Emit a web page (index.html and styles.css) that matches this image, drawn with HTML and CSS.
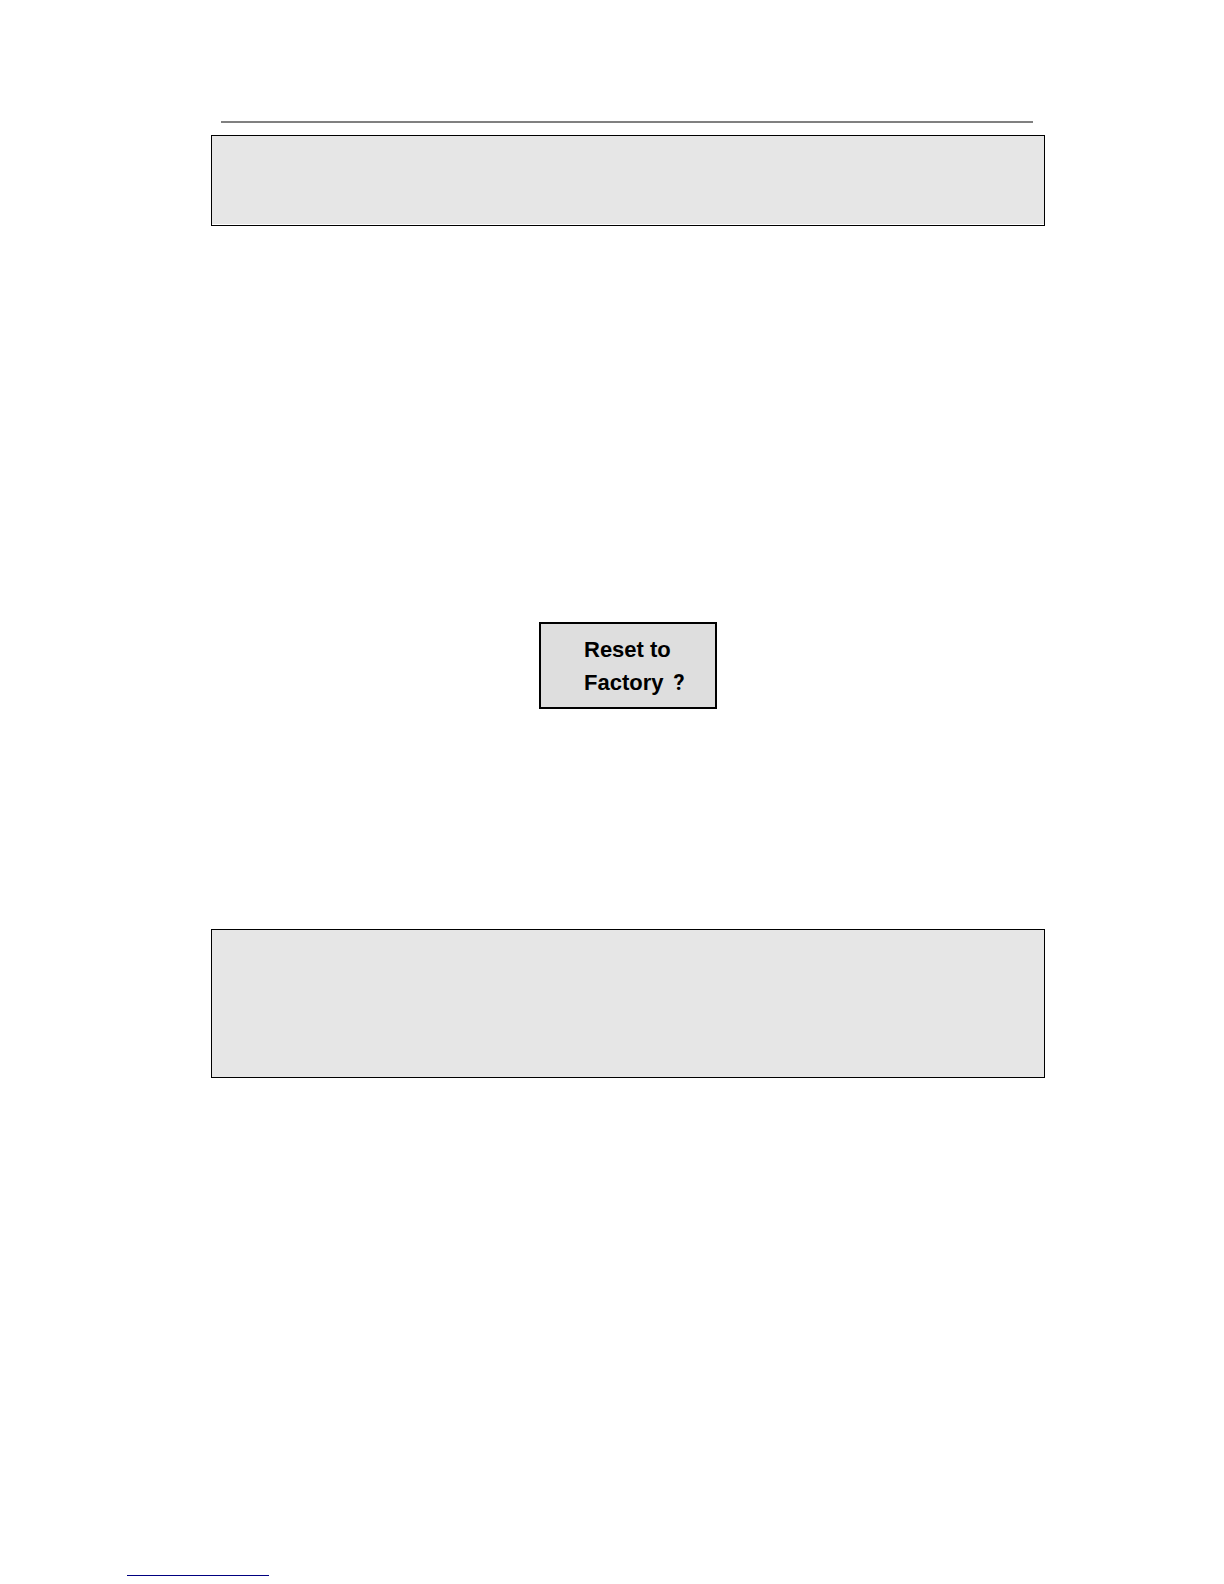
FILE: index.html
```
<!DOCTYPE html>
<html lang="en">
<head>
  <meta charset="UTF-8">
  <title>Reset to Factory</title>
  <link rel="stylesheet" href="styles.css">
</head>
<body>
  <main class="page">
    <hr class="rule">
    <div class="note-box note-small"></div>
    <div class="screen">
      <p>Reset to</p>
      <p>Factory <span class="mark">?</span></p>
    </div>
    <div class="note-box note-large"></div>
  </main>
  <footer class="footer">
    <a href="#" class="footer-link" aria-label="Website"></a>
  </footer>
</body>
</html>
```

FILE: styles.css
```
body {
  margin: 0;
  background: #fff;
  color: #000;
  font-family: "Liberation Sans", Arial, sans-serif;
}
.page {
  padding: 121px 179px 0 211px;
}
.rule {
  height: 2px;
  margin: 0 12px 12px 10px;
  border: 0;
  background: #808080;
}
.note-box {
  box-sizing: border-box;
  border: 1px solid #000;
  background: #e6e6e6;
}
.note-small {
  min-height: 91px;
  box-shadow: inset 0 -1px 0 #fff;
}
.note-large {
  min-height: 149px;
}

/* device display */
.screen {
  box-sizing: border-box;
  width: 178px;
  margin: 396px auto 220px;
  padding: 9px 0 8px 43px;
  border: 2px solid #000;
  background: #dedede;
  font-size: 22px;
  font-weight: bold;
  line-height: 33px;
}
.screen p {
  margin: 0;
}
.mark {
  margin-left: 4px;
  font-family: Roboto, sans-serif;
}

.footer {
  padding: 473px 127px 0;
}
.footer-link {
  display: block;
  width: 142px;
  height: 24px;
  border-bottom: 1px solid #000080;
}
```
